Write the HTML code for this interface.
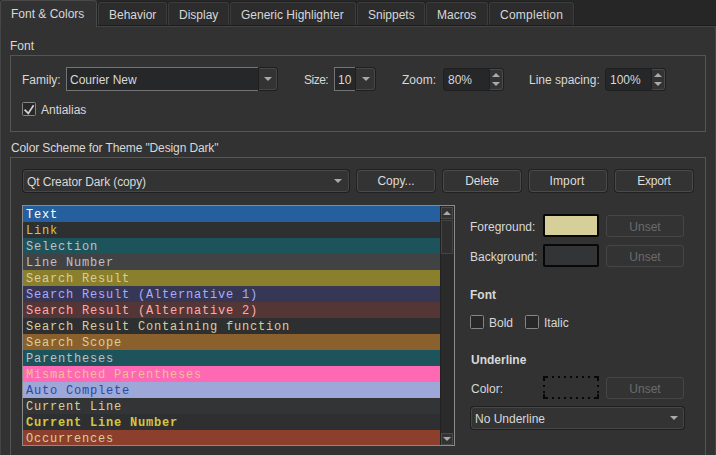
<!DOCTYPE html>
<html><head><meta charset="utf-8">
<style>
*{margin:0;padding:0;box-sizing:border-box}
html,body{width:716px;height:455px;overflow:hidden;background:#262626}
body{position:relative;font-family:"Liberation Sans",sans-serif;font-size:12px;color:#d8d8d8}
.a{position:absolute;white-space:nowrap;line-height:14px}
.tab{position:absolute;top:2px;height:23px;background:#2c2c2c;border:1px solid #3c3c3c;border-bottom:none;border-radius:3px 3px 0 0;box-shadow:0 0 0 1px #222}
.tab.act{top:0;height:27px;background:#323232;border-color:#484848;z-index:2;box-shadow:none}
.panel{position:absolute;left:0;top:26px;width:716px;height:440px;background:#323232;border:1px solid #444;z-index:1}
.grp{position:absolute;border:1px solid #555;border-radius:0}
.edit{position:absolute;background:#262729;border:1px solid #747474;border-right:none}
.cbtn{position:absolute;background:#333;border:1px solid #474747;border-radius:3px;box-shadow:0 0 0 1px #1f1f1f}
.cb2{border-left:none;border-radius:0 3px 3px 0}
.btn{position:absolute;background:#333;border:1px solid #4a4a4a;border-radius:3px;box-shadow:0 0 0 1px #222;text-align:center;line-height:20px;color:#dcdcdc}
.dis{position:absolute;background:#333;border:1px solid #464646;border-radius:3px;text-align:center;line-height:22px;color:#6b6b6b}
.arr{position:absolute;width:0;height:0;border-left:4px solid transparent;border-right:4px solid transparent;border-top:4px solid #aaa}
.arru{position:absolute;width:0;height:0;border-left:4px solid transparent;border-right:4px solid transparent;border-bottom:4px solid #aaa}
.chk{position:absolute;width:14px;height:14px;border:1px solid #858585;background:#282828;border-radius:1.5px}
.list{position:absolute;left:22px;top:205px;width:433px;height:241px;overflow:hidden;border:1px solid #8a8a8a;background:#2e2f30}
.row{position:absolute;left:0;width:418px;height:16px;font-family:"Liberation Mono",monospace;font-size:12px;letter-spacing:0.8px;line-height:16px;padding:1px 0 0 3px;white-space:pre}
b{font-weight:bold}
</style></head><body>
<!-- tabs -->
<div class="tab act" style="left:0;width:97px"></div>
<div class="tab" style="left:98px;width:69px"></div>
<div class="tab" style="left:168px;width:61px"></div>
<div class="tab" style="left:230px;width:126px"></div>
<div class="tab" style="left:357px;width:68px"></div>
<div class="tab" style="left:426px;width:62px"></div>
<div class="tab" style="left:489px;width:85px"></div>
<div class="a" style="left:11px;top:7px;z-index:3">Font &amp; Colors</div>
<div class="a" style="left:109px;top:8px">Behavior</div>
<div class="a" style="left:179px;top:8px">Display</div>
<div class="a" style="left:241px;top:8px">Generic Highlighter</div>
<div class="a" style="left:368px;top:8px">Snippets</div>
<div class="a" style="left:437px;top:8px">Macros</div>
<div class="a" style="left:500px;top:8px;letter-spacing:0.25px">Completion</div>

<div class="panel"></div>
<div style="position:absolute;left:97px;top:25px;width:619px;height:1px;background:#1c1c1c;z-index:1"></div>
<div style="position:absolute;left:0;top:0;width:716px;height:455px;z-index:4">
<!-- Font group -->
<div class="a" style="left:10px;top:39px">Font</div>
<div class="grp" style="left:10px;top:55px;width:696px;height:77px"></div>
<div class="a" style="left:22px;top:73px">Family:</div>
<div class="edit" style="left:66px;top:67px;width:193px;height:24px"></div>
<div class="a" style="left:70px;top:73px">Courier New</div>
<div class="cbtn cb2" style="left:259px;top:68px;width:18px;height:22px"></div>
<div class="arr" style="left:264px;top:77px"></div>
<div class="a" style="left:304px;top:73px;letter-spacing:-0.5px">Size:</div>
<div class="edit" style="left:334px;top:67px;width:22px;height:24px"></div>
<div class="a" style="left:338px;top:73px">10</div>
<div class="cbtn cb2" style="left:356px;top:68px;width:19px;height:22px"></div>
<div class="arr" style="left:362px;top:77px"></div>
<div class="a" style="left:402px;top:73px">Zoom:</div>
<div class="edit" style="left:443px;top:68px;width:61px;height:23px;border:1px solid #1f1f1f;border-radius:3px"></div>
<div class="a" style="left:448px;top:73px">80%</div>
<div style="position:absolute;left:489px;top:69px;width:14px;height:21px;background:#333;border:1px solid #4a4a4a;border-left:1px solid #1f1f1f;border-radius:0 3px 3px 0"></div>
<div class="arru" style="left:492px;top:73px"></div>
<div class="arr" style="left:492px;top:82px"></div>
<div class="a" style="left:529px;top:73px">Line spacing:</div>
<div class="edit" style="left:605px;top:68px;width:61px;height:23px;border:1px solid #1f1f1f;border-radius:3px"></div>
<div class="a" style="left:610px;top:73px">100%</div>
<div style="position:absolute;left:651px;top:69px;width:14px;height:21px;background:#333;border:1px solid #4a4a4a;border-left:1px solid #1f1f1f;border-radius:0 3px 3px 0"></div>
<div class="arru" style="left:654px;top:73px"></div>
<div class="arr" style="left:654px;top:82px"></div>
<div class="chk" style="left:22px;top:102px"></div>
<svg style="position:absolute;left:22px;top:102px" width="14" height="14"><path d="M2.6,7.6 L6.3,11.4 L11.6,3.2" fill="none" stroke="#d4d4d4" stroke-width="1.7"/></svg>
<div class="a" style="left:41px;top:103px">Antialias</div>

<!-- Color scheme group -->
<div class="a" style="left:11px;top:141px;letter-spacing:-0.12px">Color Scheme for Theme "Design Dark"</div>
<div class="grp" style="left:10px;top:157px;width:696px;height:300px"></div>
<div class="cbtn" style="left:23px;top:170px;width:326px;height:22px"></div>
<div class="a" style="left:27px;top:175px;letter-spacing:-0.11px">Qt Creator Dark (copy)</div>
<div class="arr" style="left:334px;top:179px"></div>
<div class="btn" style="left:357px;top:170px;width:78px;height:22px">Copy...</div>
<div class="btn" style="left:443px;top:170px;width:78px;height:22px;letter-spacing:-0.2px">Delete</div>
<div class="btn" style="left:529px;top:170px;width:78px;height:22px;letter-spacing:0.2px;padding-right:2px">Import</div>
<div class="btn" style="left:615px;top:170px;width:78px;height:22px;letter-spacing:-0.2px">Export</div>

<div class="list">
<div class="row" style="top:0;background:#255f9e;color:#fff">Text</div>
<div class="row" style="top:16px;background:#2e2f30;color:#d6c540">Link</div>
<div class="row" style="top:32px;background:#1d545c;color:#bec0c2">Selection</div>
<div class="row" style="top:48px;background:#404244;color:#bec0c2">Line Number</div>
<div class="row" style="top:64px;background:#8a7f2c;color:#d6cf9a">Search Result</div>
<div class="row" style="top:80px;background:#363655;color:#aaaaff">Search Result (Alternative 1)</div>
<div class="row" style="top:96px;background:#553636;color:#ffaaaa">Search Result (Alternative 2)</div>
<div class="row" style="top:112px;background:#2e2f30;color:#d6cf9a">Search Result Containing function</div>
<div class="row" style="top:128px;background:#8a602c;color:#d6cf9a">Search Scope</div>
<div class="row" style="top:144px;background:#1d545c;color:#bec0c2">Parentheses</div>
<div class="row" style="top:160px;background:#ff69b4;color:#f0c090">Mismatched Parentheses</div>
<div class="row" style="top:176px;background:#9ea8d8;color:#2848a8">Auto Complete</div>
<div class="row" style="top:192px;background:#333435;color:#d6cf9a">Current Line</div>
<div class="row" style="top:208px;background:#2e2f30;color:#d6c540;font-weight:bold">Current Line Number</div>
<div class="row" style="top:224px;background:#8b3f2c;color:#d6cf9a">Occurrences</div>
<!-- scrollbar -->
<div style="position:absolute;left:417px;top:0;width:14px;height:240px;background:#2a2a2a;border-left:1px solid #222"></div>
<div style="position:absolute;left:418px;top:1px;width:12px;height:12px;background:#333;border:1px solid #4a4a4a"></div>
<div class="arru" style="left:420px;top:5px"></div>
<div style="position:absolute;left:418px;top:14px;width:12px;height:34px;background:#2f2f2f;border:1px solid #444"></div>
<div style="position:absolute;left:418px;top:227px;width:12px;height:12px;background:#333;border:1px solid #4a4a4a"></div>
<div class="arr" style="left:420px;top:231px"></div>
</div>

<div class="a" style="left:470px;top:220px">Foreground:</div>
<div style="position:absolute;left:543px;top:214px;width:56px;height:23px;border:2px solid #080808;border-radius:2px;background:#d6cf9a"></div>
<div class="dis" style="left:606px;top:215px;width:78px;height:22px">Unset</div>
<div class="a" style="left:470px;top:250px">Background:</div>
<div style="position:absolute;left:543px;top:244px;width:56px;height:23px;border:2px solid #080808;border-radius:2px;background:#333436"></div>
<div class="dis" style="left:606px;top:245px;width:78px;height:22px">Unset</div>

<div class="a" style="left:470px;top:288px;font-weight:bold">Font</div>
<div class="chk" style="left:470px;top:315px"></div>
<div class="a" style="left:489px;top:316px">Bold</div>
<div class="chk" style="left:525px;top:315px"></div>
<div class="a" style="left:544px;top:316px">Italic</div>

<div class="a" style="left:471px;top:353px;font-weight:bold">Underline</div>
<div class="a" style="left:471px;top:382px">Color:</div>
<svg style="position:absolute;left:543px;top:376px" width="56" height="23" fill="#080808"><rect x="0" y="0" width="5" height="2"/><rect x="0" y="0" width="2" height="5"/><rect x="51" y="0" width="5" height="2"/><rect x="54" y="0" width="2" height="5"/><rect x="0" y="21" width="5" height="2"/><rect x="0" y="18" width="2" height="5"/><rect x="51" y="21" width="5" height="2"/><rect x="54" y="18" width="2" height="5"/><rect x="9" y="0" width="2" height="2"/><rect x="9" y="21" width="2" height="2"/><rect x="15" y="0" width="2" height="2"/><rect x="15" y="21" width="2" height="2"/><rect x="21" y="0" width="2" height="2"/><rect x="21" y="21" width="2" height="2"/><rect x="27" y="0" width="2" height="2"/><rect x="27" y="21" width="2" height="2"/><rect x="33" y="0" width="2" height="2"/><rect x="33" y="21" width="2" height="2"/><rect x="39" y="0" width="2" height="2"/><rect x="39" y="21" width="2" height="2"/><rect x="45" y="0" width="2" height="2"/><rect x="45" y="21" width="2" height="2"/><rect x="0" y="9" width="2" height="2"/><rect x="54" y="9" width="2" height="2"/><rect x="0" y="15" width="2" height="2"/><rect x="54" y="15" width="2" height="2"/></svg>
<div class="dis" style="left:606px;top:377px;width:78px;height:22px">Unset</div>
<div class="cbtn" style="left:471px;top:407px;width:213px;height:22px"></div>
<div class="a" style="left:475px;top:412px">No Underline</div>
<div class="arr" style="left:670px;top:416px"></div>
</div>
</body></html>
